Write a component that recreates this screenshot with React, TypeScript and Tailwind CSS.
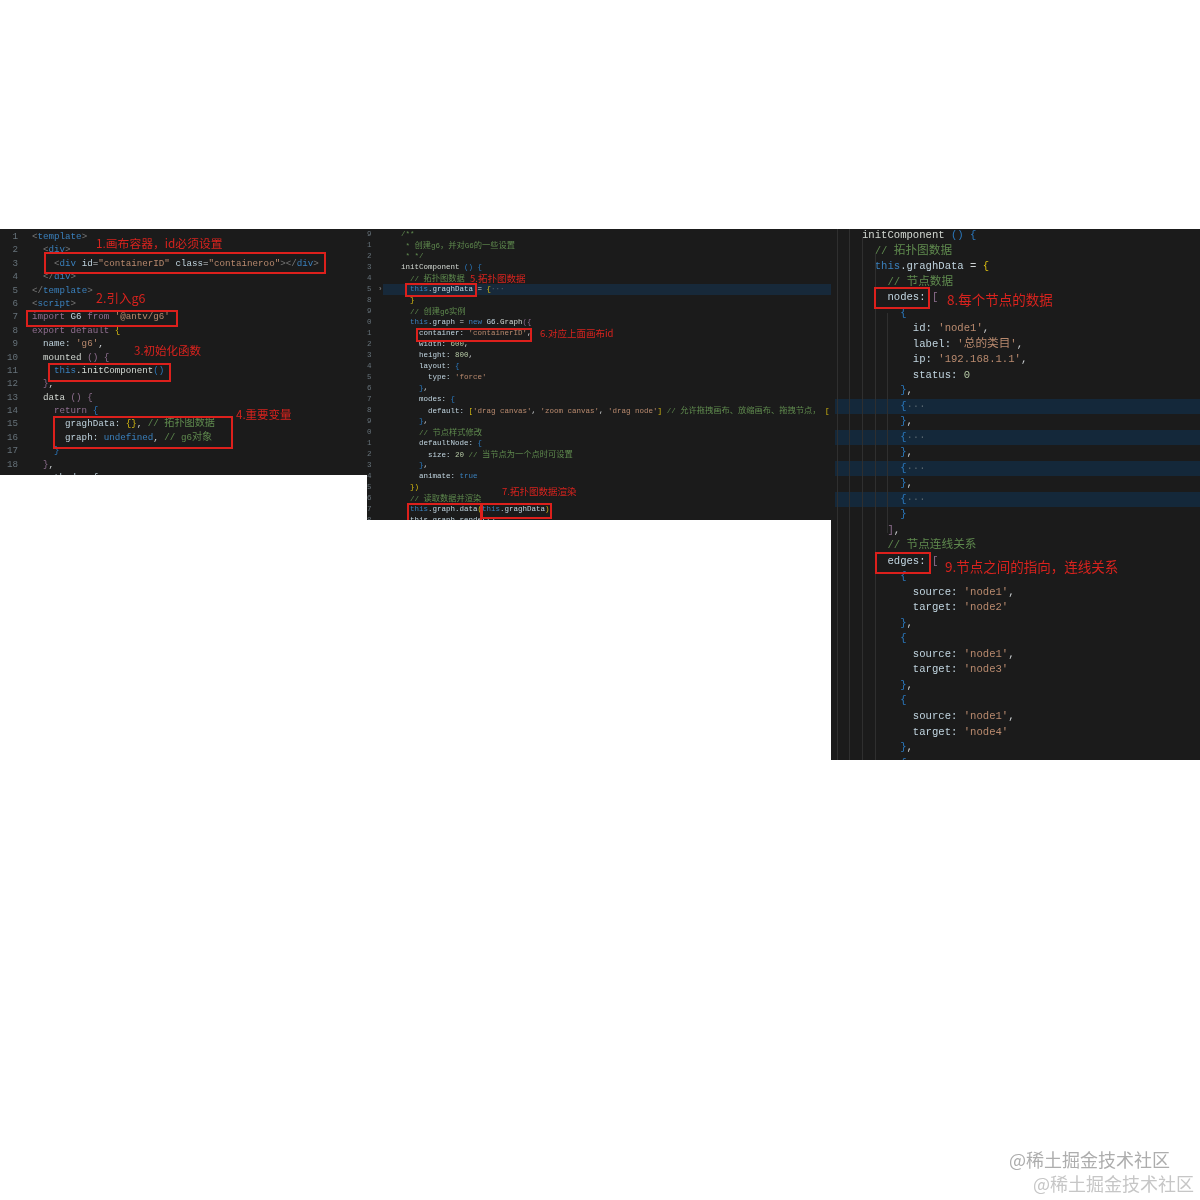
import React from "react";

const c: Record<string, string> = {
  t: "text-[#cfd3d5]",
  k: "text-[#3a80bd]",
  v: "text-[#c0d4df]",
  s: "text-[#b98a6e]",
  g: "text-[#5f8a4e]",
  p: "text-[#767676]",
  y: "text-[#d8bc10]",
  m: "text-[#8f6f90]",
  b: "text-[#2a78bd]",
  n: "text-[#b5c8a4]",
  f: "text-[#d3d8d2]",
  d: "text-[#56646e]",
};

type Seg = [string, string];
type Row = { s: Seg[]; n?: string; hl?: boolean };

const tag = (indent: string, name: string, close = false): Seg[] => [
  [indent + (close ? "</" : "<"), "p"],
  [name, "k"],
  [">", "p"],
];

const rows1: Row[] = [
  { n: "1", s: tag("", "template") },
  { n: "2", s: tag("  ", "div") },
  {
    n: "3",
    s: [
      ["    <", "p"],
      ["div ", "k"],
      ["id", "v"],
      ["=", "t"],
      ['"containerID" ', "s"],
      ["class", "v"],
      ["=", "t"],
      ['"containeroo"', "s"],
      ["></", "p"],
      ["div", "k"],
      [">", "p"],
    ],
  },
  { n: "4", s: tag("  ", "div", true) },
  { n: "5", s: tag("", "template", true) },
  { n: "6", s: tag("", "script") },
  {
    n: "7",
    s: [
      ["import ", "m"],
      ["G6 ", "v"],
      ["from ", "m"],
      ["'@antv/g6'", "s"],
    ],
  },
  {
    n: "8",
    s: [
      ["export default ", "m"],
      ["{", "y"],
    ],
  },
  {
    n: "9",
    s: [
      ["  name: ", "v"],
      ["'g6'", "s"],
      [",", "t"],
    ],
  },
  {
    n: "10",
    s: [
      ["  mounted ", "f"],
      ["() {", "m"],
    ],
  },
  {
    n: "11",
    s: [
      ["    this", "k"],
      [".initComponent", "f"],
      ["()", "b"],
    ],
  },
  {
    n: "12",
    s: [
      ["  }", "m"],
      [",", "t"],
    ],
  },
  {
    n: "13",
    s: [
      ["  data ", "f"],
      ["() {", "m"],
    ],
  },
  {
    n: "14",
    s: [
      ["    return ", "m"],
      ["{", "b"],
    ],
  },
  {
    n: "15",
    s: [
      ["      graghData: ", "v"],
      ["{}", "y"],
      [", ", "t"],
      ["// 拓扑图数据", "g"],
    ],
  },
  {
    n: "16",
    s: [
      ["      graph: ", "v"],
      ["undefined", "k"],
      [", ", "t"],
      ["// g6对象", "g"],
    ],
  },
  { n: "17", s: [["    }", "b"]] },
  {
    n: "18",
    s: [
      ["  }", "m"],
      [",", "t"],
    ],
  },
  { n: "", s: [["  methods: {", "v"]] },
];

const rows2: Row[] = [
  { n: "9", s: [["/**", "g"]] },
  { n: "1", s: [[" * 创建g6，并对G6的一些设置", "g"]] },
  { n: "2", s: [[" * */", "g"]] },
  {
    n: "3",
    s: [
      ["initComponent ", "f"],
      ["() {", "b"],
    ],
  },
  { n: "4", s: [["  // 拓扑图数据", "g"]] },
  {
    n: "5",
    hl: true,
    s: [
      ["  this", "k"],
      [".graghData", "v"],
      [" = ", "t"],
      ["{", "y"],
      ["···", "d"],
    ],
  },
  { n: "8", s: [["  }", "y"]] },
  { n: "9", s: [["  // 创建g6实例", "g"]] },
  {
    n: "0",
    s: [
      ["  this", "k"],
      [".graph", "v"],
      [" = ", "t"],
      ["new ", "k"],
      ["G6", "v"],
      [".Graph", "f"],
      ["({", "m"],
    ],
  },
  {
    n: "1",
    s: [
      ["    container: ", "v"],
      ["'containerID'", "s"],
      [",", "t"],
    ],
  },
  {
    n: "2",
    s: [
      ["    width: ", "v"],
      ["600", "n"],
      [",", "t"],
    ],
  },
  {
    n: "3",
    s: [
      ["    height: ", "v"],
      ["800", "n"],
      [",", "t"],
    ],
  },
  {
    n: "4",
    s: [
      ["    layout: ", "v"],
      ["{", "b"],
    ],
  },
  {
    n: "5",
    s: [
      ["      type: ", "v"],
      ["'force'", "s"],
    ],
  },
  {
    n: "6",
    s: [
      ["    }", "b"],
      [",", "t"],
    ],
  },
  {
    n: "7",
    s: [
      ["    modes: ", "v"],
      ["{", "b"],
    ],
  },
  {
    n: "8",
    s: [
      ["      default: ", "v"],
      ["[", "y"],
      ["'drag canvas'", "s"],
      [", ", "t"],
      ["'zoom canvas'", "s"],
      [", ", "t"],
      ["'drag node'", "s"],
      ["]", "y"],
      [" // 允许拖拽画布、放缩画布、拖拽节点， ", "g"],
      ["[", "y"],
    ],
  },
  {
    n: "9",
    s: [
      ["    }", "b"],
      [",", "t"],
    ],
  },
  { n: "0", s: [["    // 节点样式修改", "g"]] },
  {
    n: "1",
    s: [
      ["    defaultNode: ", "v"],
      ["{", "b"],
    ],
  },
  {
    n: "2",
    s: [
      ["      size: ", "v"],
      ["20 ", "n"],
      ["// 当节点为一个点时可设置", "g"],
    ],
  },
  {
    n: "3",
    s: [
      ["    }", "b"],
      [",", "t"],
    ],
  },
  {
    n: "4",
    s: [
      ["    animate: ", "v"],
      ["true", "k"],
    ],
  },
  { n: "5", s: [["  })", "y"]] },
  { n: "6", s: [["  // 读取数据并渲染", "g"]] },
  {
    n: "7",
    s: [
      ["  this", "k"],
      [".graph.data", "v"],
      ["(", "y"],
      ["this", "k"],
      [".graghData", "v"],
      [")", "y"],
    ],
  },
  { n: "8", s: [["  this.graph.render()", "v"]] },
];

const open3 = (i: string): Seg[] => [[i + "{", "b"]];
const close3 = (i: string): Seg[] => [
  [i + "}", "b"],
  [",", "t"],
];
const fold3: Row = {
  hl: true,
  s: [
    ["      {", "b"],
    ["···", "d"],
  ],
};
const edge = (target: string): Row[] => [
  { s: open3("      ") },
  {
    s: [
      ["        source: ", "v"],
      ["'node1'", "s"],
      [",", "t"],
    ],
  },
  {
    s: [
      ["        target: ", "v"],
      [`'${target}'`, "s"],
    ],
  },
  { s: close3("      ") },
];

const rows3: Row[] = [
  {
    s: [
      ["initComponent ", "f"],
      ["() {", "b"],
    ],
  },
  { s: [["  // 拓扑图数据", "g"]] },
  {
    s: [
      ["  this", "k"],
      [".graghData", "v"],
      [" = ", "t"],
      ["{", "y"],
    ],
  },
  { s: [["    // 节点数据", "g"]] },
  {
    s: [
      ["    nodes: ", "v"],
      ["[", "m"],
    ],
  },
  { s: open3("      ") },
  {
    s: [
      ["        id: ", "v"],
      ["'node1'", "s"],
      [",", "t"],
    ],
  },
  {
    s: [
      ["        label: ", "v"],
      ["'总的类目'", "s"],
      [",", "t"],
    ],
  },
  {
    s: [
      ["        ip: ", "v"],
      ["'192.168.1.1'", "s"],
      [",", "t"],
    ],
  },
  {
    s: [
      ["        status: ", "v"],
      ["0", "n"],
    ],
  },
  { s: close3("      ") },
  fold3,
  { s: close3("      ") },
  fold3,
  { s: close3("      ") },
  fold3,
  { s: close3("      ") },
  fold3,
  { s: [["      }", "b"]] },
  {
    s: [
      ["    ]", "m"],
      [",", "t"],
    ],
  },
  { s: [["    // 节点连线关系", "g"]] },
  {
    s: [
      ["    edges: ", "v"],
      ["[", "m"],
    ],
  },
  ...edge("node2"),
  ...edge("node3"),
  ...edge("node4"),
  { s: open3("      ") },
];

const mono = "font-['Liberation_Mono','Noto_Sans_CJK_SC',monospace]";
const cjk = "font-['Noto_Sans_CJK_SC','Liberation_Sans',sans-serif]";

function Segs({ s }: { s: Seg[] }) {
  return (
    <>
      {s.map(([text, key], i) => (
        <span key={i} className={c[key]}>
          {text.split(/([\u4e00-\u9fff、，]+)/).map((part, j) =>
            j % 2 ? (
              <span key={j} className="text-[1.1em]">
                {part}
              </span>
            ) : (
              part
            ),
          )}
        </span>
      ))}
    </>
  );
}

function Box({ className }: { className: string }) {
  return <div className={`absolute border-2 border-[#dc201c] ${className}`} />;
}

function Note({ className, children }: { className: string; children: React.ReactNode }) {
  return (
    <div className={`absolute whitespace-nowrap text-[#d8231e] blur-[0.3px] ${cjk} ${className}`}>{children}</div>
  );
}

function Guide({ className }: { className: string }) {
  return <div className={`absolute w-px bg-[#2f2f2f] ${className}`} />;
}

export default function App() {
  return (
    <div className="relative h-[1200px] w-full overflow-hidden bg-white">
      <div className="flex items-start pt-[229px]">
        {/* left panel */}
        <section className="relative h-[246px] w-[367px] shrink-0 overflow-hidden bg-[#1b1b1b]">
          <div className="pt-[1px] blur-[0.5px]">
            {rows1.map((r, i) => (
              <div key={i} className={`flex h-[13.4px] whitespace-pre text-[9.2px] leading-[13.4px] ${mono}`}>
                <span className="w-[18px] shrink-0 text-right text-[#66727a]">{r.n}</span>
                <span className="pl-[14px]">
                  <Segs s={r.s} />
                </span>
              </div>
            ))}
          </div>
          <Box className="left-[44px] top-[23px] h-[22px] w-[282px]" />
          <Box className="left-[26px] top-[81px] h-[17px] w-[152px]" />
          <Box className="left-[48px] top-[134px] h-[19px] w-[123px]" />
          <Box className="left-[53px] top-[187px] h-[33px] w-[180px]" />
          <Note className="left-[96px] top-[6px] text-[11.8px] leading-4">1.画布容器，id必须设置</Note>
          <Note className="left-[96px] top-[61px] text-[12.5px] leading-4">2.引入g6</Note>
          <Note className="left-[134px] top-[113px] text-[11.5px] leading-4">3.初始化函数</Note>
          <Note className="left-[236px] top-[177px] text-[11.5px] leading-4">4.重要变量</Note>
        </section>

        {/* middle panel */}
        <section className="relative h-[291px] w-[464px] shrink-0 overflow-hidden bg-[#1b1b1b]">
          <div className="blur-[0.55px]">
            {rows2.map((r, i) => (
              <div
                key={i}
                className={`flex h-[11px] items-center whitespace-pre text-[7.5px] leading-[11px] ${mono} ${
                  r.hl ? "bg-[linear-gradient(to_right,#1b1b1b_16px,#17293a_16px)]" : ""
                }`}
              >
                <span className="w-[11px] shrink-0 text-[#66727a]">{r.n}</span>
                <span className="w-[23px] shrink-0 text-[#8a8a8a]">{r.hl ? "›" : ""}</span>
                <span>
                  <Segs s={r.s} />
                </span>
              </div>
            ))}
          </div>
          <Box className="left-[38px] top-[54px] h-[14px] w-[72px]" />
          <Box className="left-[49px] top-[99px] h-[14px] w-[116px]" />
          <Box className="left-[40px] top-[274px] h-[24px] w-[75px]" />
          <Box className="left-[114px] top-[274px] h-[16px] w-[71px]" />
          <Note className="left-[103px] top-[41px] text-[9.5px] leading-4">5.拓扑图数据</Note>
          <Note className="left-[173px] top-[96px] text-[9.5px] leading-4">6.对应上面画布id</Note>
          <Note className="left-[135px] top-[254px] text-[9.5px] leading-4">7.拓扑图数据渲染</Note>
        </section>

        {/* right panel */}
        <section className="relative h-[531px] w-[369px] shrink-0 overflow-hidden bg-[#1b1b1b]">
          <div className="-mt-[1px] blur-[0.45px]">
            {rows3.map((r, i) => (
              <div
                key={i}
                className={`ml-[4px] h-[15.53px] whitespace-pre pl-[27px] text-[10.6px] leading-[15.53px] ${mono} ${
                  r.hl ? "bg-[#14283a]" : ""
                }`}
              >
                <Segs s={r.s} />
              </div>
            ))}
          </div>
          <Guide className="left-[6px] top-0 h-[531px]" />
          <Guide className="left-[18px] top-0 h-[531px]" />
          <Guide className="left-[31px] top-[8px] h-[523px]" />
          <Guide className="left-[44px] top-[24px] h-[523px]" />
          <Guide className="left-[56px] top-[84px] h-[220px]" />
          <Box className="left-[43px] top-[58px] h-[22px] w-[56px]" />
          <Box className="left-[44px] top-[323px] h-[22px] w-[56px]" />
          <Note className="left-[116px] top-[61px] text-[13.5px] leading-[18px]">8.每个节点的数据</Note>
          <Note className="left-[114px] top-[328px] text-[13.5px] leading-[18px]">9.节点之间的指向，连线关系</Note>
        </section>
      </div>

      {/* watermark */}
      <div className={`absolute bottom-[5px] right-[6px] flex flex-col items-end text-[18px] leading-6 blur-[0.5px] ${cjk}`}>
        <span className="pr-[24px] text-[#adadad]">@稀土掘金技术社区</span>
        <span className="text-[#c6c6c6]">@稀土掘金技术社区</span>
      </div>
    </div>
  );
}
